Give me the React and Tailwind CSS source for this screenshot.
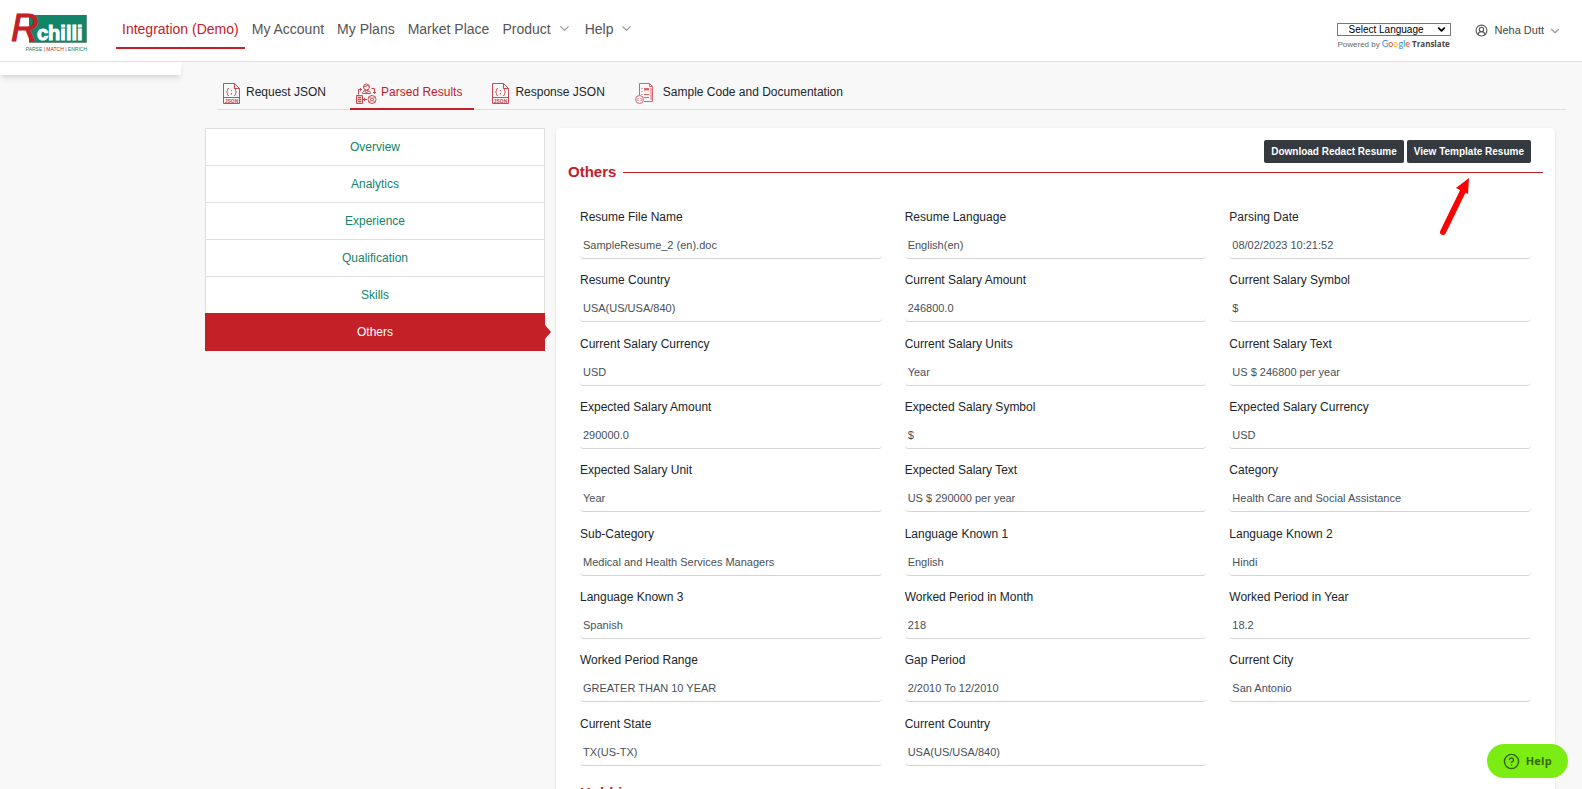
import React, { useState } from 'react';
import { ChevronDown, CircleQuestionMark, CircleUserRound } from 'lucide-react';

const navItems = [
  { label: 'Integration (Demo)', active: true },
  { label: 'My Account' },
  { label: 'My Plans' },
  { label: 'Market Place' },
  { label: 'Product', menu: true },
  { label: 'Help', menu: true },
];

const sections = [
  'Overview',
  'Analytics',
  'Experience',
  'Qualification',
  'Skills',
  'Others',
];

const fields = [
  ['Resume File Name', 'SampleResume_2 (en).doc'],
  ['Resume Language', 'English(en)'],
  ['Parsing Date', '08/02/2023 10:21:52'],
  ['Resume Country', 'USA(US/USA/840)'],
  ['Current Salary Amount', '246800.0'],
  ['Current Salary Symbol', '$'],
  ['Current Salary Currency', 'USD'],
  ['Current Salary Units', 'Year'],
  ['Current Salary Text', 'US $ 246800 per year'],
  ['Expected Salary Amount', '290000.0'],
  ['Expected Salary Symbol', '$'],
  ['Expected Salary Currency', 'USD'],
  ['Expected Salary Unit', 'Year'],
  ['Expected Salary Text', 'US $ 290000 per year'],
  ['Category', 'Health Care and Social Assistance'],
  ['Sub-Category', 'Medical and Health Services Managers'],
  ['Language Known 1', 'English'],
  ['Language Known 2', 'Hindi'],
  ['Language Known 3', 'Spanish'],
  ['Worked Period in Month', '218'],
  ['Worked Period in Year', '18.2'],
  ['Worked Period Range', 'GREATER THAN 10 YEAR'],
  ['Gap Period', '2/2010 To 12/2010'],
  ['Current City', 'San Antonio'],
  ['Current State', 'TX(US-TX)'],
  ['Current Country', 'USA(US/USA/840)'],
];

function Logo() {
  return (
    <svg
      width="76"
      height="44"
      viewBox="0 0 76 44"
      className="overflow-visible"
      role="img"
      aria-label="RChilli"
    >
      <rect x="17" y="6" width="57" height="27" fill="#128468" />
      <path d="M17 33.5h57.5V6" fill="none" stroke="#6b8f84" />
      <text
        x="25"
        y="31"
        fontSize="20"
        fontWeight="700"
        fontFamily="'Liberation Sans Narrow', 'Liberation Sans', sans-serif"
        fill="#fff"
        stroke="#fff"
        strokeWidth="1"
      >
        chilli
      </text>
      <text
        x="-1"
        y="32"
        fontSize="38"
        fontStyle="italic"
        fontFamily="'Liberation Sans', sans-serif"
        fill="#c32027"
        stroke="#c32027"
        strokeWidth="1"
      >
        R
      </text>
      <text
        x="75"
        y="42"
        textAnchor="end"
        fontSize="5"
        fontFamily="'Liberation Sans', sans-serif"
        fill="#128468"
      >
        PARSE <tspan fill="#c32027">| MATCH |</tspan> ENRICH
      </text>
    </svg>
  );
}

function JsonIcon() {
  return (
    <svg width="19" height="21" viewBox="0 0 19 21" fill="none" stroke="#cb4a50" aria-hidden="true">
      <path d="M.5 20.500V.5h11l5 5v15z" />
      <path d="M11.500.5v5h5M.5 14.500h16" />
      <path d="M6 5.500c-1.500 0-1.500.5-1.500 1.500s0 1.500-1 2c1 .5 1 1 1 2s0 1.500 1.500 1.500M11 5.500c1.500 0 1.500.5 1.500 1.500s0 1.500 1 2c-1 .5-1 1-1 2s0 1.500-1.500 1.500" />
      <path d="M8.500 7v1M8.500 10v1.500" />
      <text
        x="8.5"
        y="19.5"
        textAnchor="middle"
        fontSize="5"
        fontWeight="700"
        fontFamily="'Liberation Sans', sans-serif"
        fill="#cb4a50"
        stroke="none"
      >
        JSON
      </text>
    </svg>
  );
}

function ParsedIcon() {
  return (
    <svg width="21" height="21" viewBox="0 0 21 21" fill="none" stroke="#cb4a50" aria-hidden="true">
      <circle cx="10.500" cy="4" r="3" />
      <path d="M7.500 3.500c2 0 3.500-.5 4-1.500.5 1 1 1.500 2 1.500M6.500 10.500c0-2 1.500-3 4-3s4 1 4 3zM8.500 8l2 2 2-2" />
      <path d="M2.500 11.500v-5h3M4 5l1.500 1.500L4 8M15.500 5.500h3v5M17 9l1.500 1.500L20 9" />
      <path d="M.5 12.500h6v8h-6z" fill="#eec0c2" />
      <path d="M2 14.500h3M2 16.500h3M2 18.500h3M7 16.500h4M8.500 15v3" />
      <circle cx="16" cy="16.500" r="4" />
      <circle cx="16" cy="16.500" r="1.500" />
      <path d="M13 13.500l1.500 1.500M19 13.500L17.500 15M13 19.500l1.500-1.500M19 19.500L17.500 18" />
    </svg>
  );
}

function DocIcon() {
  return (
    <svg width="24" height="21" viewBox="0 0 24 21" fill="none" stroke="#d9646a" aria-hidden="true">
      <path d="M4.500 12V.5h10l3 3v15H9" />
      <path d="M14.500.5v3h3M16 5v12" />
      <path d="M6.500 5.500h1M9 5.500h5M6.500 8.500h1M6.500 11.500h1M9 11.500h5M9 14.500h5" />
      <path d="M9 6.500h5" strokeWidth="2" />
      <circle cx="4.500" cy="16.500" r="4" />
      <path d="M3.500 15L2 16.500 3.500 18M5.500 15L7 16.500 5.500 18" />
    </svg>
  );
}

const tabs = [
  { label: 'Request JSON', icon: <JsonIcon /> },
  { label: 'Parsed Results', icon: <ParsedIcon />, active: true },
  { label: 'Response JSON', icon: <JsonIcon /> },
  { label: 'Sample Code and Documentation', icon: <DocIcon /> },
];

function Header() {
  return (
    <header className="flex h-[62px] shrink-0 items-center border-b border-[#dedede] bg-white pr-5 pl-3">
      <a href="#home" className="mr-7">
        <Logo />
      </a>
      <nav className="flex items-center gap-px">
        {navItems.map((item) => (
          <a
            key={item.label}
            href="#nav"
            className={`flex h-9 items-center border-b-2 px-1.5 pb-0.5 text-sm whitespace-nowrap ${
              item.active
                ? 'border-[#c32027] text-[#c32027]'
                : 'border-transparent text-[#555]'
            }`}
          >
            {item.label}
            {item.menu && <ChevronDown size={15} className="ml-1.5 text-[#999]" />}
          </a>
        ))}
      </nav>
      <div className="ml-auto flex items-center gap-6">
        <div className="mt-3 flex flex-col">
          <div className="relative h-[13px] w-[114px]">
            <select
              aria-label="Select Language"
              className="block h-[13px] w-full appearance-none border border-[#767676] bg-white pl-2.5 text-[10px] leading-[11px] text-black"
            >
              <option>Select Language</option>
            </select>
            <ChevronDown
              size={11}
              strokeWidth={4}
              className="pointer-events-none absolute top-px right-1 text-black"
            />
          </div>
          <p className="mt-0.5 flex items-baseline gap-0.5 text-[8px] leading-3 whitespace-nowrap text-[#666]">
            Powered by
            <a href="#translate" className="flex items-baseline gap-0.5">
              <span className="font-['Lato',sans-serif] text-[9px]">
                <span className="text-[#4285f4]">G</span>
                <span className="text-[#ea4335]">o</span>
                <span className="text-[#fbbc05]">o</span>
                <span className="text-[#4285f4]">g</span>
                <span className="text-[#34a853]">l</span>
                <span className="text-[#ea4335]">e</span>
              </span>
              <span className="font-['Open_Sans',sans-serif] font-bold text-[#444]">
                Translate
              </span>
            </a>
          </p>
        </div>
        <button type="button" className="flex items-center text-[11px] text-[#444]">
          <CircleUserRound size={13} strokeWidth={2} className="mr-1.5 text-[#555]" />
          Neha Dutt
          <ChevronDown size={14} className="ml-1 text-[#999]" />
        </button>
      </div>
    </header>
  );
}

function Tabs() {
  return (
    <nav className="mr-4 ml-9 flex gap-3 border-b border-[#dedede]">
      {tabs.map((tab) => (
        <a
          key={tab.label}
          href="#tab"
          className={`-mb-px flex h-8 items-center gap-1 border-b-2 pr-3 pb-0.5 pl-1.5 text-xs whitespace-nowrap ${
            tab.active
              ? 'border-[#c32027] text-[#c32027]'
              : 'border-transparent text-[#212529]'
          }`}
        >
          <span className="mt-0.5">{tab.icon}</span>
          {tab.label}
        </a>
      ))}
    </nav>
  );
}

function SectionList({ current, onSelect }) {
  return (
    <ul className="w-[340px] shrink-0 self-start border border-[#dedede] bg-white">
      {sections.map((name) => (
        <li key={name} className="relative border-b border-[#dedede] last:border-b-0">
          <button
            type="button"
            onClick={() => onSelect(name)}
            className={`block h-9 w-full text-center text-xs ${
              name === current
                ? 'bg-[#c32027] text-white outline outline-[#c32027]'
                : 'text-[#128468]'
            }`}
          >
            {name}
          </button>
          {name === current && (
            <svg
              width="7"
              height="14"
              viewBox="0 0 7 14"
              className="absolute top-[11px] left-full"
              aria-hidden="true"
            >
              <path d="M0 0h1l6 7-6 7H0z" fill="#c32027" />
            </svg>
          )}
        </li>
      ))}
    </ul>
  );
}

function Field({ id, label, value }) {
  return (
    <div>
      <label htmlFor={id} className="block text-xs leading-[18px] text-[#212529]">
        {label}
      </label>
      <input
        id={id}
        type="text"
        readOnly
        defaultValue={value}
        className="mt-[5px] block h-7 w-full rounded border-b border-[#d5d5d5] px-[3px] pt-px text-[11px] text-[#495057]"
      />
    </div>
  );
}

export default function App() {
  const [section, setSection] = useState('Others');

  return (
    <div className="flex h-screen flex-col overflow-hidden bg-[#f8f8f8] font-['Liberation_Sans',Arial,sans-serif]">
      <Header />
      <div className="flex min-h-0 flex-1">
        <aside className="h-[13px] w-[181px] shrink-0 bg-white shadow-md" />
        <main className="min-w-0 flex-1 pt-4">
          <Tabs />
          <div className="mt-[18px] mr-[27px] ml-6 flex gap-[11px]">
            <SectionList current={section} onSelect={setSection} />
            <section className="relative min-w-0 flex-1 rounded bg-white px-3 pt-3 pb-6 shadow-sm">
              <div className="mr-3 flex justify-end gap-[3px]">
                <button
                  type="button"
                  className="h-[23px] rounded-xs bg-[#343a40] px-[7px] text-[10px] font-bold text-white"
                >
                  Download Redact Resume
                </button>
                <button
                  type="button"
                  className="h-[23px] rounded-xs bg-[#343a40] px-[7px] text-[10px] font-bold text-white"
                >
                  View Template Resume
                </button>
              </div>
              <h2 className="flex items-center gap-[7px] text-[15px] leading-[18px] font-bold text-[#c32027]">
                Others
                <span className="h-px flex-1 bg-[#c32027]" />
              </h2>
              <div className="mx-3 mt-[27px] grid min-h-[570px] grid-cols-3 gap-x-[23px]">
                {fields.map(([label, value], i) => (
                  <Field key={label} id={`field-${i}`} label={label} value={value} />
                ))}
              </div>
              <h2 className="mx-3 mt-1.5 text-[15px] leading-[18px] font-bold text-[#c32027]">
                Hobbies
              </h2>
              <svg
                width="30"
                height="58"
                viewBox="0 0 30 58"
                className="absolute top-[50px] right-[85px]"
                aria-hidden="true"
              >
                <path d="M3 54L23 13" stroke="#f00" strokeWidth="6" strokeLinecap="round" />
                <path d="M29 0L16 10l12 6z" fill="#f00" />
              </svg>
            </section>
          </div>
        </main>
      </div>
      <button
        type="button"
        className="fixed right-3.5 bottom-[11px] flex h-[34px] items-center gap-1.5 rounded-full bg-[#7bed12] px-4 font-['Open_Sans',sans-serif] text-[11px] font-bold tracking-wide text-[#35670a]"
      >
        <CircleQuestionMark size={17} />
        Help
      </button>
    </div>
  );
}
